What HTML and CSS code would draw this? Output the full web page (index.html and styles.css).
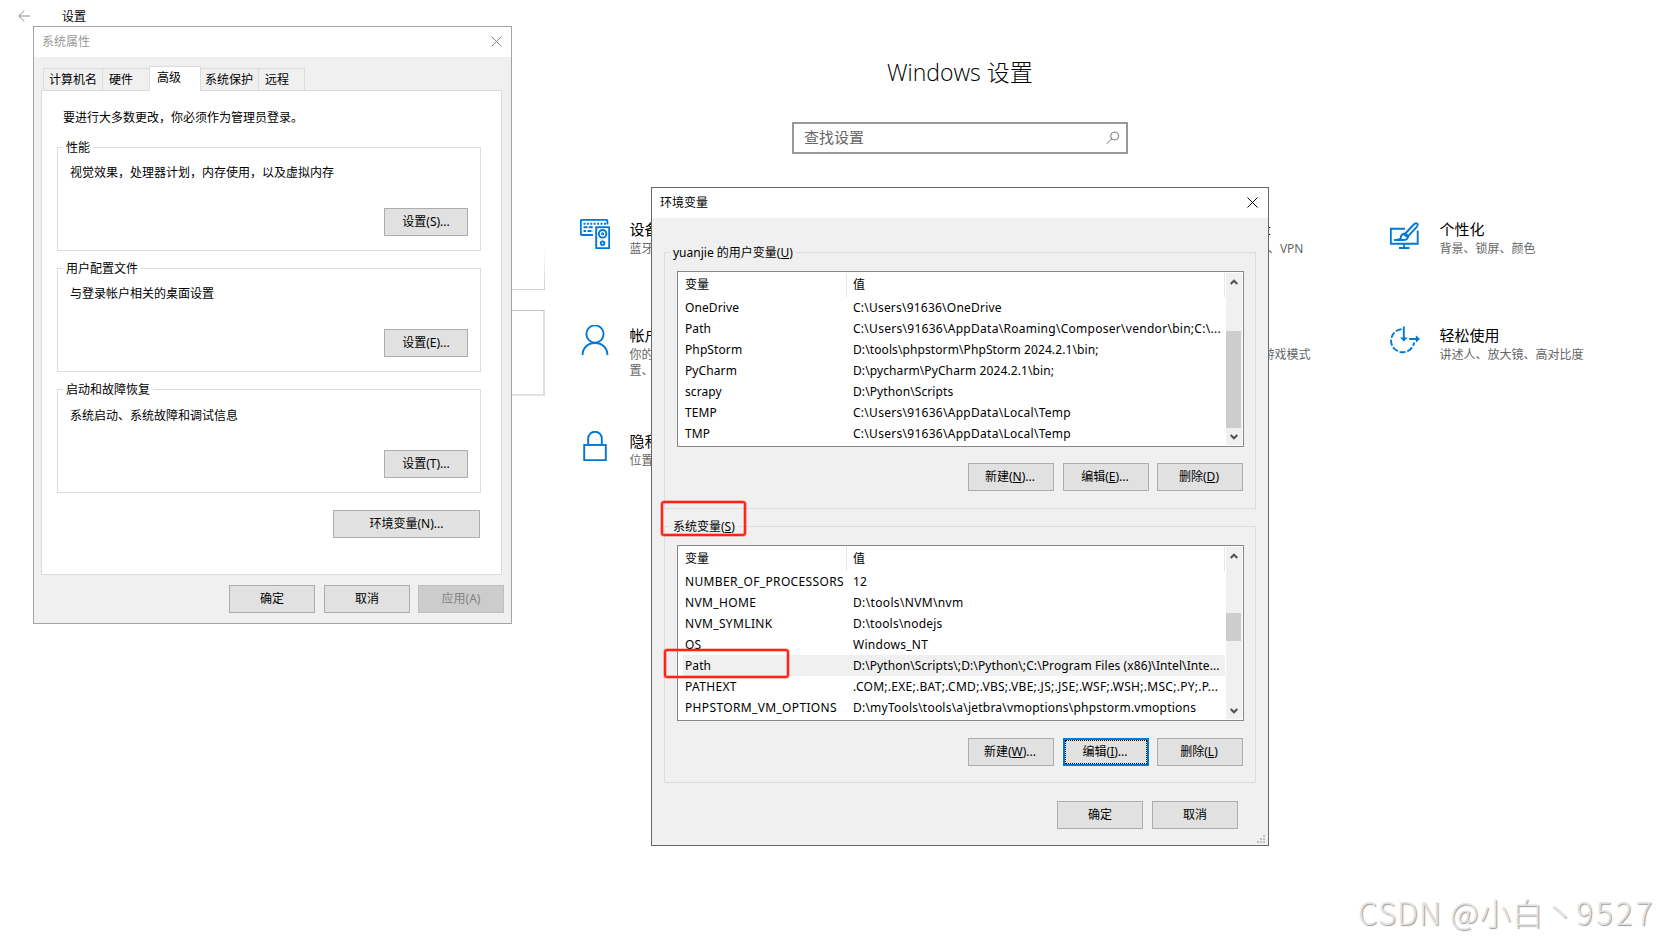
FILE: index.html
```
<!DOCTYPE html>
<html lang="zh-CN">
<head>
	<meta charset="UTF-8">
	<title>设置</title>
	<link rel="stylesheet" href="styles.css">
</head>
<body>
	<div class="settings">
		<div class="topbar">
			<svg class="back" width="12" height="12" viewBox="0 0 12 12"><path d="M12 6H1M6 .7L.8 6L6 11.3"/></svg>
			<span>设置</span>
		</div>
		<h1>Windows 设置</h1>
		<div class="search">
			<span>查找设置</span>
			<svg width="14" height="14" viewBox="0 0 14 14"><circle cx="8.6" cy="5" r="4"/><path d="M5.7 7.9L.8 12.8"/></svg>
		</div>
		<div class="items">
			<div class="item">
				<svg class="icon" viewBox="0 0 30 30">
					<path d="M13 16H2.2Q.8 16 .8 14.6V2.2Q.8 .8 2.2 .8H26Q27.4 .8 27.4 2.2V5.5"/>
					<path d="M3.5 4.7H26" stroke-dasharray="2 1.4"/>
					<path d="M3.5 8.3H13M3.5 12H6M7.5 12H13" stroke-dasharray="4 1.2"/>
					<rect x="16.2" y="8.2" width="13" height="21"/>
					<circle cx="22.6" cy="14.8" r="3.8"/>
					<circle cx="22.6" cy="14.8" r=".6"/>
					<circle cx="22.6" cy="24.3" r="1.8"/>
				</svg>
				<div>
					<h3>设备</h3>
					<p>蓝牙</p>
				</div>
			</div>
			<div class="item"></div>
			<div class="item">
				<div class="icon"></div>
				<div class="cut net">
					<h3>Internet</h3>
					<p>、VPN</p>
				</div>
			</div>
			<div class="item">
				<svg class="icon" viewBox="0 0 30 30">
					<path d="M15 9.7H.8V24.7H27.7V11.5"/>
					<path d="M14.2 25V29M9 29H19.5"/>
					<path d="M15.3 14.5L24.3 5Q26 3.4 27.4 4.8Q28.4 6.2 27 7.7L18.2 17.2Z"/>
					<path d="M15.3 14.5Q10.8 14.8 10.8 19.2Q10 20.8 4 21H13Q18 21 18.2 17.2M14 15.5L17.5 18"/>
				</svg>
				<div>
					<h3>个性化</h3>
					<p>背景、锁屏、颜色</p>
				</div>
			</div>
			<div class="item">
				<svg class="icon" viewBox="0 0 30 30">
					<circle cx="15" cy="9" r="8.6"/>
					<path d="M2.6 30C2.6 22.5 8 18 15 18S27.4 22.5 27.4 30"/>
				</svg>
				<div>
					<h3>帐户</h3>
					<p>你的<br>置、</p>
				</div>
			</div>
			<div class="item"></div>
			<div class="item">
				<div class="icon"></div>
				<div class="cut game">
					<h3>&nbsp;</h3>
					<p>游戏模式</p>
				</div>
			</div>
			<div class="item">
				<svg class="icon" viewBox="0 0 30 30">
					<path d="M11.6 4.1A11.6 11.6 0 1 0 24.1 17.5" stroke-dasharray="6.2 1.8"/>
					<path d="M13.8 1.5V14M19.2 14H27"/>
					<path class="fill" d="M10 12.6H17.6L13.8 16.6ZM25.8 10.2L30 14L25.8 17.8Z"/>
				</svg>
				<div>
					<h3>轻松使用</h3>
					<p>讲述人、放大镜、高对比度</p>
				</div>
			</div>
			<div class="item">
				<svg class="icon" viewBox="0 0 30 30">
					<rect x="4.2" y="14" width="21.6" height="15.2"/>
					<path d="M8.2 14V7.5A6.8 6.8 0 0 1 21.8 7.5V14"/>
				</svg>
				<div>
					<h3>隐私</h3>
					<p>位置</p>
				</div>
			</div>
		</div>
		<div class="tile-edge top"></div>
		<div class="tile-edge bottom"></div>
	</div>

	<div class="window sys">
		<div class="title">
			<span>系统属性</span>
			<svg width="11" height="11" viewBox="0 0 11 11"><path d="M.5 .5L10.5 10.5M10.5 .5L.5 10.5"/></svg>
		</div>
		<div class="tabs">
			<div class="tab tab1">计算机名</div>
			<div class="tab tab2">硬件</div>
			<div class="tab active">高级</div>
			<div class="tab tab4">系统保护</div>
			<div class="tab tab5">远程</div>
		</div>
		<div class="panel">
			<p class="intro">要进行大多数更改，你必须作为管理员登录。</p>
			<fieldset>
				<legend>性能</legend>
				<p>视觉效果，处理器计划，内存使用，以及虚拟内存</p>
				<button class="btn">设置(S)...</button>
			</fieldset>
			<fieldset>
				<legend>用户配置文件</legend>
				<p>与登录帐户相关的桌面设置</p>
				<button class="btn">设置(E)...</button>
			</fieldset>
			<fieldset>
				<legend>启动和故障恢复</legend>
				<p class="low">系统启动、系统故障和调试信息</p>
				<button class="btn">设置(T)...</button>
			</fieldset>
			<button class="btn btn-env">环境变量(N)...</button>
		</div>
		<div class="buttons">
			<button class="btn">确定</button>
			<button class="btn">取消</button>
			<button class="btn btn-disabled">应用(A)</button>
		</div>
	</div>

	<div class="window env">
		<div class="title">
			<span>环境变量</span>
			<svg width="11" height="11" viewBox="0 0 11 11"><path d="M.5 .5L10.5 10.5M10.5 .5L.5 10.5"/></svg>
		</div>
		<fieldset>
			<legend>yuanjie 的用户变量(<u>U</u>)</legend>
			<div class="list">
				<div class="rows">
					<div class="row head"><span>变量</span><span>值</span></div>
					<div class="row"><span>OneDrive</span><span class="mid">C:\Users\91636\OneDrive</span></div>
					<div class="row"><span>Path</span><span class="wide">C:\Users\91636\AppData\Roaming\Composer\vendor\bin;C:\...</span></div>
					<div class="row"><span>PhpStorm</span><span>D:\tools\phpstorm\PhpStorm 2024.2.1\bin;</span></div>
					<div class="row"><span>PyCharm</span><span>D:\pycharm\PyCharm 2024.2.1\bin;</span></div>
					<div class="row"><span>scrapy</span><span>D:\Python\Scripts</span></div>
					<div class="row"><span>TEMP</span><span class="wide">C:\Users\91636\AppData\Local\Temp</span></div>
					<div class="row"><span>TMP</span><span class="wide">C:\Users\91636\AppData\Local\Temp</span></div>
				</div>
				<div class="scroll scroll-user">
					<svg width="8" height="6" viewBox="0 0 8 6"><path d="M.7 5L4 1.7L7.3 5"/></svg>
					<div class="thumb"></div>
					<svg width="8" height="6" viewBox="0 0 8 6"><path d="M.7 1L4 4.3L7.3 1"/></svg>
				</div>
			</div>
			<div class="buttons">
				<button class="btn">新建(<u>N</u>)...</button>
				<button class="btn">编辑(<u>E</u>)...</button>
				<button class="btn">删除(<u>D</u>)</button>
			</div>
		</fieldset>
		<fieldset class="system">
			<legend>系统变量(<u>S</u>)</legend>
			<div class="list">
				<div class="rows">
					<div class="row head"><span>变量</span><span>值</span></div>
					<div class="row"><span class="caps">NUMBER_OF_PROCESSORS</span><span>12</span></div>
					<div class="row"><span class="caps">NVM_HOME</span><span class="caps">D:\tools\NVM\nvm</span></div>
					<div class="row"><span class="caps">NVM_SYMLINK</span><span class="mid">D:\tools\nodejs</span></div>
					<div class="row"><span>OS</span><span class="wide">Windows_NT</span></div>
					<div class="row selected"><span>Path</span><span>D:\Python\Scripts\;D:\Python\;C:\Program Files (x86)\Intel\Inte...</span></div>
					<div class="row"><span class="caps">PATHEXT</span><span class="wide">.COM;.EXE;.BAT;.CMD;.VBS;.VBE;.JS;.JSE;.WSF;.WSH;.MSC;.PY;.P...</span></div>
					<div class="row"><span class="caps">PHPSTORM_VM_OPTIONS</span><span class="mid">D:\myTools\tools\a\jetbra\vmoptions\phpstorm.vmoptions</span></div>
				</div>
				<div class="scroll scroll-sys">
					<svg width="8" height="6" viewBox="0 0 8 6"><path d="M.7 5L4 1.7L7.3 5"/></svg>
					<div class="thumb"></div>
					<svg width="8" height="6" viewBox="0 0 8 6"><path d="M.7 1L4 4.3L7.3 1"/></svg>
				</div>
			</div>
			<div class="buttons">
				<button class="btn">新建(<u>W</u>)...</button>
				<button class="btn btn-focus">编辑(<u>I</u>)...</button>
				<button class="btn">删除(<u>L</u>)</button>
			</div>
		</fieldset>
		<div class="buttons bottom">
			<button class="btn">确定</button>
			<button class="btn">取消</button>
		</div>
		<svg class="grip" width="8" height="8" viewBox="0 0 8 8"><path d="M6 0h2v2h-2zM3 3h2v2h-2zM6 3h2v2h-2zM0 6h2v2h-2zM3 6h2v2h-2zM6 6h2v2h-2z"/></svg>
	</div>

	<div class="mark mark-title"></div>
	<div class="mark mark-path"></div>
	<div class="watermark">CSDN @小白丶<span>9527</span></div>
</body>
</html>
```

FILE: styles.css
```
* {
	margin: 0;
	padding: 0;
	box-sizing: border-box;
}

body {
	position: relative;
	width: 1660px;
	height: 945px;
	overflow: hidden;
	background-color: #ffffff;
	color: #000000;
	font-family: "Noto Sans", "Noto Sans CJK SC", sans-serif;
	font-size: 12px;
	line-height: 16px;
}

svg {
	fill: none;
	stroke: #000000;
}

/* settings page */
.topbar {
	display: flex;
	align-items: center;
	height: 32px;
	padding-left: 18px;
}

.topbar span {
	padding-top: 1px;
}

.back {
	margin-right: 32px;
	margin-bottom: 1px;
	stroke: #8a8a8a;
}

h1 {
	height: 48px;
	margin-top: 16px;
	padding-left: 887px;
	font-family: "Open Sans", "Noto Sans CJK SC", sans-serif;
	font-size: 23px;
	font-weight: 300;
	line-height: 48px;
}

.search {
	display: flex;
	justify-content: space-between;
	align-items: center;
	width: 336px;
	height: 32px;
	margin: 26px 0 0 792px;
	padding: 0 6px 0 10px;
	border: 2px solid #999999;
	color: #666666;
	font-size: 15px;
}

.search span {
	padding-bottom: 2px;
}

.search svg {
	stroke: #777777;
}

.items {
	display: grid;
	grid-template-columns: repeat(4, 270px);
	grid-auto-rows: 106px;
	margin: 65px 0 0 580px;
}

.item {
	display: flex;
	gap: 19.5px;
}

.icon {
	width: 30px;
	height: 30px;
	stroke: #0078d7;
	stroke-width: 1.9;
}

.icon .fill {
	fill: #0078d7;
	stroke: none;
}

.item h3 {
	margin-bottom: 2px;
	font-size: 15px;
	font-weight: 400;
	line-height: 20px;
}

.item p {
	color: #666666;
	white-space: nowrap;
}

.cut {
	text-align: right;
}

.net {
	width: 134px;
}

.net h3 {
	padding-right: 33px;
}

.game {
	width: 141px;
}

.tile-edge {
	position: absolute;
	left: 500px;
	width: 45px;
}

.tile-edge.top {
	top: 250px;
	height: 40px;
	border: 0 solid;
	border-right-width: 1px;
	border-bottom-width: 1px;
	border-image: linear-gradient(to bottom, #ffffff, #d0d0d0) 1;
}

.tile-edge.bottom {
	top: 310px;
	height: 86px;
	border-top: 1px solid #c4c4c4;
	border-right: 2px solid #dddddd;
	border-bottom: 2px solid #e2e2e2;
}

/* windows */
.window {
	position: absolute;
	background-color: #f0f0f0;
}

.title {
	display: flex;
	justify-content: space-between;
	align-items: center;
	height: 30px;
	background-color: #ffffff;
}

.title svg {
	margin-bottom: 2px;
}

fieldset {
	border: 1px solid #dcdcdc;
}

legend {
	height: 17px;
	padding: 0 3px;
	line-height: 17px;
}

.btn {
	width: 86px;
	height: 28px;
	border: 1px solid #adadad;
	background-color: #e1e1e1;
	color: #000000;
	font: inherit;
	text-align: center;
}

.buttons {
	display: flex;
	justify-content: flex-end;
	gap: 8px;
}

.buttons .btn:first-child {
	margin-right: 1px;
}

.sys {
	left: 33px;
	top: 26px;
	width: 479px;
	height: 598px;
	border: 1px solid #a5a5a5;
}

.sys .title {
	padding: 0 9px 0 8px;
	color: #999999;
}

.sys .title svg {
	stroke: #888888;
}

.tabs {
	display: flex;
	align-items: flex-end;
	height: 33px;
	padding-left: 9px;
}

.tab {
	height: 22px;
	border: 1px solid #dcdcdc;
	border-bottom: 0;
	border-right: 0;
	padding-left: 6px;
	line-height: 22px;
	white-space: nowrap;
}

.tab1 {
	width: 59px;
	padding-left: 5px;
}

.tab2 {
	width: 47px;
}

.tab.active {
	height: 25px;
	width: 52px;
	margin-bottom: -1px;
	padding-left: 7px;
	border-right: 1px solid #dcdcdc;
	background-color: #ffffff;
	z-index: 1;
}

.tab4 {
	width: 57px;
	padding-left: 4px;
	border-left: 0;
}

.tab5 {
	width: 47px;
	border-right: 1px solid #dcdcdc;
}

.panel {
	width: 461px;
	height: 485px;
	margin-left: 7px;
	padding: 19px 21px 0 15px;
	border: 1px solid #dcdcdc;
	background-color: #ffffff;
}

.intro {
	margin-bottom: 13px;
	padding-left: 6px;
}

.sys fieldset {
	width: 424px;
	height: 112px;
	margin-bottom: 9px;
	padding: 9px 12px 0;
}

.sys fieldset .low {
	padding-top: 1px;
	margin-bottom: -1px;
}

.sys legend {
	margin-left: -7px;
}

.sys fieldset .btn {
	display: block;
	width: 84px;
	margin: 27px 0 0 auto;
}

.panel .btn-env {
	display: block;
	width: 147px;
	margin: 17px 0 0 auto;
}

.sys > .buttons {
	margin-top: 10px;
	padding-right: 7px;
}

.btn-disabled {
	border-color: #bfbfbf;
	background-color: #cccccc;
	color: #838383;
}

.env {
	left: 651px;
	top: 187px;
	width: 618px;
	height: 659px;
	border: 1px solid #666666;
}

.env .title {
	margin-bottom: 26px;
	padding: 0 10px 0 8px;
}

.env fieldset {
	width: 591px;
	height: 265px;
	margin: 0 0 9px 12px;
	padding: 10px 11px 0 12px;
}

.env legend {
	margin-left: -7px;
}

.env .buttons {
	margin-top: 16px;
	padding-right: 1px;
}

.env .system .buttons {
	margin-top: 17px;
}

.env .buttons.bottom {
	margin-top: 18px;
	padding-right: 30px;
}

.env fieldset .btn {
	padding-right: 2px;
}

.env .btn-focus {
	border: 2px solid #0078d7;
	outline: 1px dotted #000000;
	outline-offset: -3px;
}

.list {
	display: flex;
	width: 567px;
	height: 176px;
	padding: 1px 1px 1px 5px;
	border: 1px solid #828790;
	background-color: #ffffff;
}

.rows {
	width: 542px;
}

.row {
	display: flex;
	height: 21px;
	line-height: 21px;
	letter-spacing: 0.1px;
	white-space: nowrap;
}

.row span {
	padding-left: 2px;
}

.row span:first-child {
	width: 168px;
}

.row .mid {
	letter-spacing: 0.22px;
}

.row .wide {
	letter-spacing: 0.28px;
}

.row .caps {
	letter-spacing: 0.35px;
}

.row.head {
	height: 24px;
	border-right: 1px solid #e5e5e5;
	line-height: 24px;
}

.row.head span:first-child {
	width: 164px;
	margin-right: 4px;
	border-right: 1px solid #e5e5e5;
}

.row.selected {
	background-color: #f0f0f0;
}

.scroll {
	display: flex;
	flex-direction: column;
	align-items: center;
	justify-content: space-between;
	width: 16px;
	margin-left: 1px;
	padding: 6px 0 5px;
	background-color: #f0f0f0;
}

.scroll svg {
	margin-right: 1px;
	stroke: #505050;
	stroke-width: 2;
}

.thumb {
	width: 15px;
	margin-right: 1px;
	background-color: #cdcdcd;
}

.scroll-user .thumb {
	height: 97px;
	margin-top: 40px;
}

.scroll-sys .thumb {
	height: 28px;
	margin-bottom: 13px;
}

.grip {
	position: absolute;
	right: 3px;
	bottom: 2px;
	fill: #bfbfbf;
	stroke: none;
}

/* red marks over the window */
.mark {
	position: absolute;
	border: 2px solid #ff2416;
	border-radius: 3px;
	box-shadow: 0 0 0 0.5px rgba(255, 36, 22, 0.6), inset 0 0 0 0.5px rgba(255, 36, 22, 0.6);
}

.mark-title {
	left: 661px;
	top: 501px;
	width: 85px;
	height: 35px;
}

.mark-path {
	left: 664px;
	top: 649px;
	width: 125px;
	height: 29px;
}

.watermark {
	position: absolute;
	left: 1358px;
	top: 890px;
	color: #e4e4e4;
	font-family: "Noto Sans CJK SC", sans-serif;
	font-size: 31px;
	font-weight: 300;
	line-height: 44px;
	letter-spacing: 1.2px;
	text-shadow: 1px 1px 1px #999999;
	white-space: nowrap;
}

.watermark span {
	letter-spacing: 3.2px;
}
```
